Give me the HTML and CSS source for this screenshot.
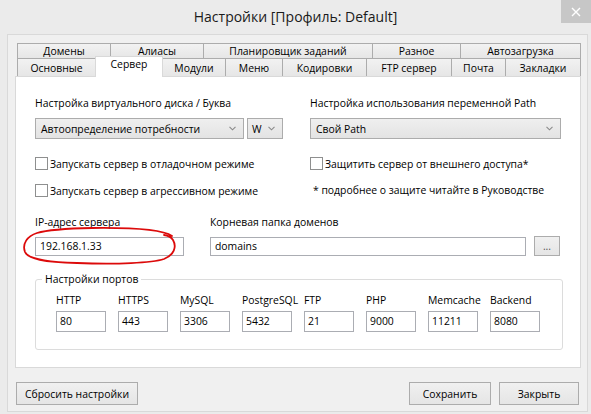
FILE: index.html
```html
<!DOCTYPE html>
<html lang="ru">
<head>
<meta charset="utf-8">
<title>Настройки</title>
<link rel="stylesheet" href="styles.css">
</head>
<body>
<div class="window">
  <div class="titlebar">
    <span class="tb-spacer"></span>
    <div class="title">Настройки [Профиль: Default]</div>
    <div class="close"><svg width="10" height="10" viewBox="0 0 10 10"><path d="M1 1 L9 9 M9 1 L1 9" stroke="#fff" stroke-width="1.4" fill="none"/></svg></div>
  </div>
  <div class="frame">
    <div class="tabs">
      <div class="tabrow back">
        <div class="tab tw94 first">Домены</div>
        <div class="tab tw93">Алиасы</div>
        <div class="tab tw169">Планировщик заданий</div>
        <div class="tab tw88">Разное</div>
        <div class="tab tw120">Автозагрузка</div>
      </div>
      <div class="tabrow front">
        <div class="tab tw79 first">Основные</div>
        <div class="tab tw68 sel">Сервер</div>
        <div class="tab tw63">Модули</div>
        <div class="tab tw57">Меню</div>
        <div class="tab tw84">Кодировки</div>
        <div class="tab tw85">FTP сервер</div>
        <div class="tab tw54">Почта</div>
        <div class="tab tw75">Закладки</div>
      </div>
    </div>
    <div class="panel">
      <div class="row two r-label">
        <div class="lbl">Настройка виртуального диска / Буква</div>
        <div class="lbl">Настройка использования переменной Path</div>
      </div>
      <div class="row two r-select">
        <div class="selgroup">
          <div class="select s-auto"><span>Автоопределение потребности</span><svg class="chev" width="7" height="5" viewBox="0 0 7 5"><path d="M0.5 0.8 L3.5 3.8 L6.5 0.8" stroke="#8a8a8a" stroke-width="1.1" fill="none"/></svg></div>
          <div class="select s-letter"><span>W</span><svg class="chev" width="7" height="5" viewBox="0 0 7 5"><path d="M0.5 0.8 L3.5 3.8 L6.5 0.8" stroke="#8a8a8a" stroke-width="1.1" fill="none"/></svg></div>
        </div>
        <div class="select s-path"><span>Свой Path</span><svg class="chev" width="7" height="5" viewBox="0 0 7 5"><path d="M0.5 0.8 L3.5 3.8 L6.5 0.8" stroke="#8a8a8a" stroke-width="1.1" fill="none"/></svg></div>
      </div>
      <div class="row two r-check1">
        <label class="check"><span class="box"></span>Запускать сервер в отладочном режиме</label>
        <label class="check"><span class="box"></span>Защитить сервер от внешнего доступа*</label>
      </div>
      <div class="row two r-check2">
        <label class="check"><span class="box"></span>Запускать сервер в агрессивном режиме</label>
        <div class="note">* подробнее о защите читайте в Руководстве</div>
      </div>
      <div class="row two2 r-label2">
        <div class="lbl">IP-адрес сервера</div>
        <div class="lbl">Корневая папка доменов</div>
      </div>
      <div class="row two2 r-inputs">
        <div class="ipwrap">
          <div class="input ip">192.168.1.33</div>
          <svg class="circle" width="162" height="44" viewBox="0 0 162 44"><path d="M150 10 C140 3 110 1.5 70 2 C45 2.5 25 4 15 7 C5 10 0 18 3 26 C6 33 22 36 55 37 C95 38.5 130 37 142 33 C152 29 155 21 151 14 C149 11 146 9.5 142 9" stroke="#dc0a0a" stroke-width="1.8" fill="none" stroke-linecap="round"/></svg>
        </div>
        <div class="rootgroup">
          <div class="input root">domains</div>
          <div class="btn dots">...</div>
        </div>
      </div>
      <fieldset class="ports">
        <legend>Настройки портов</legend>
        <div class="portlist">
          <div class="port"><div class="plbl">HTTP</div><div class="input pin">80</div></div>
          <div class="port"><div class="plbl">HTTPS</div><div class="input pin">443</div></div>
          <div class="port"><div class="plbl">MySQL</div><div class="input pin">3306</div></div>
          <div class="port"><div class="plbl">PostgreSQL</div><div class="input pin">5432</div></div>
          <div class="port"><div class="plbl">FTP</div><div class="input pin">21</div></div>
          <div class="port"><div class="plbl">PHP</div><div class="input pin">9000</div></div>
          <div class="port"><div class="plbl">Memcache</div><div class="input pin">11211</div></div>
          <div class="port"><div class="plbl">Backend</div><div class="input pin">8080</div></div>
        </div>
      </fieldset>
    </div>
    <div class="buttons">
      <div class="btn b-reset">Сбросить настройки</div>
      <div class="right-btns">
        <div class="btn b-save">Сохранить</div>
        <div class="btn b-close">Закрыть</div>
      </div>
    </div>
  </div>
</div>
</body>
</html>
```
FILE: styles.css
```css
* { box-sizing: border-box; }
html, body { margin: 0; padding: 0; }
body {
  width: 591px;
  height: 414px;
  overflow: hidden;
  background: #ebebeb;
  font-family: "Open Sans", sans-serif;
  font-size: 10.4px;
  color: #000;
}
.window { width: 591px; height: 414px; display: flex; flex-direction: column; }
.titlebar {
  height: 34px;
  display: grid;
  grid-template-columns: 30px 1fr 30px;
}
.title {
  text-align: center;
  font-size: 14px;
  line-height: 34px;
  color: #1a1a1a;
}
.close {
  height: 23px;
  background: #c7c7c7;
  display: flex;
  align-items: center;
  justify-content: center;
}
.frame {
  margin: 0 3px 2px 7px;
  flex: 1;
  border: 1px solid #d9d9d9;
  background: #f0f0f0;
  padding: 8px 0 0 7px;
}
.tabs { margin-left: 2px; width: 564px; }
.tabrow { display: flex; }
.tabrow.back { height: 15px; }
.tabrow.front { height: 18px; align-items: flex-end; }
.tab {
  background: linear-gradient(#f2f2f2, #e6e6e6);
  border-top: 1px solid #acacac;
  border-right: 1px solid #acacac;
  text-align: center;
  white-space: nowrap;
}
.tab.first { border-left: 1px solid #acacac; }
.back .tab { height: 15px; line-height: 14px; }
.front .tab { height: 18px; line-height: 18px; }
.front .tab.sel {
  height: 21px;
  margin-bottom: -1px;
  margin-left: -1px;
  border: 1px solid #d9d9d9;
  border-bottom: none;
  background: #fff;
  line-height: 15px;
  position: relative;
  z-index: 2;
}
.tw94 { width: 94px; } .tw93 { width: 93px; } .tw169 { width: 169px; }
.tw88 { width: 88px; } .tw120 { width: 120px; } .tw79 { width: 79px; }
.tw68 { width: 68px; } .tw63 { width: 63px; } .tw57 { width: 57px; }
.tw84 { width: 84px; } .tw85 { width: 85px; } .tw54 { width: 54px; }
.tw75 { width: 75px; }

.panel {
  width: 566px;
  height: 292px;
  background: #fff;
  border: 1px solid #d9d9d9;
  padding: 18px 0 0 19px;
}
.row { display: grid; }
.row.two { grid-template-columns: 275px auto; }
.row.two2 { grid-template-columns: 175px auto; }
.lbl { line-height: 16px; height: 16px; white-space: nowrap; }
.r-select { margin-top: 7px; height: 21px; }
.selgroup { display: flex; gap: 3px; }
.select {
  height: 21px;
  border: 1px solid #acacac;
  background: linear-gradient(#efefef, #e3e3e3);
  display: flex;
  align-items: center;
  justify-content: space-between;
  padding: 0 7px 0 5px;
}
.s-auto { width: 209px; }
.s-letter { width: 36px; padding-left: 4px; }
.s-path { width: 251px; }
.chev { display: block; }
.r-check1 { margin-top: 16px; height: 17px; }
.r-check2 { margin-top: 10px; height: 17px; }
.check { display: flex; align-items: center; gap: 2px; white-space: nowrap; }
.box {
  width: 13px;
  height: 13px;
  border: 1px solid #8e8f8f;
  background: #fff;
}
.note { padding-left: 3px; line-height: 17px; white-space: nowrap; }
.r-label2 { margin-top: 15px; }
.r-inputs { margin-top: 7px; height: 19px; }
.input {
  height: 19px;
  border: 1px solid #abadb3;
  background: #fff;
  padding-left: 4px;
  line-height: 17px;
}
.ipwrap { position: relative; }
.ip { width: 149px; }
.circle { position: absolute; left: -13px; top: -11px; }
.rootgroup { display: flex; gap: 8px; }
.root { width: 316px; }
.btn {
  border: 1px solid #acacac;
  background: linear-gradient(#f0f0f0, #e5e5e5);
  display: flex;
  align-items: center;
  justify-content: center;
  white-space: nowrap;
}
.dots { width: 26px; height: 20px; margin-top: -1px; color: #555; }
.ports {
  margin: 15px 0 0 0;
  width: 528px;
  height: 79px;
  border: 1px solid #dcdcdc;
  border-radius: 3px;
  padding: 0;
}
.ports legend {
  margin-left: 6px;
  padding: 0 3px;
  line-height: 16px;
}
.portlist { display: flex; gap: 12px; padding: 5px 0 0 20px; }
.port { width: 50px; display: flex; flex-direction: column; gap: 3px; }
.plbl { line-height: 16px; height: 16px; white-space: nowrap; }
.pin { height: 21px; line-height: 19px; padding-left: 3px; }
.buttons {
  margin-top: 14px;
  display: flex;
  justify-content: space-between;
  padding: 0 8px 0 1px;
}
.buttons .btn { height: 23px; }
.right-btns { display: flex; gap: 8px; }
.b-reset { width: 122px; }
.b-save { width: 82px; }
.b-close { width: 80px; }
```
